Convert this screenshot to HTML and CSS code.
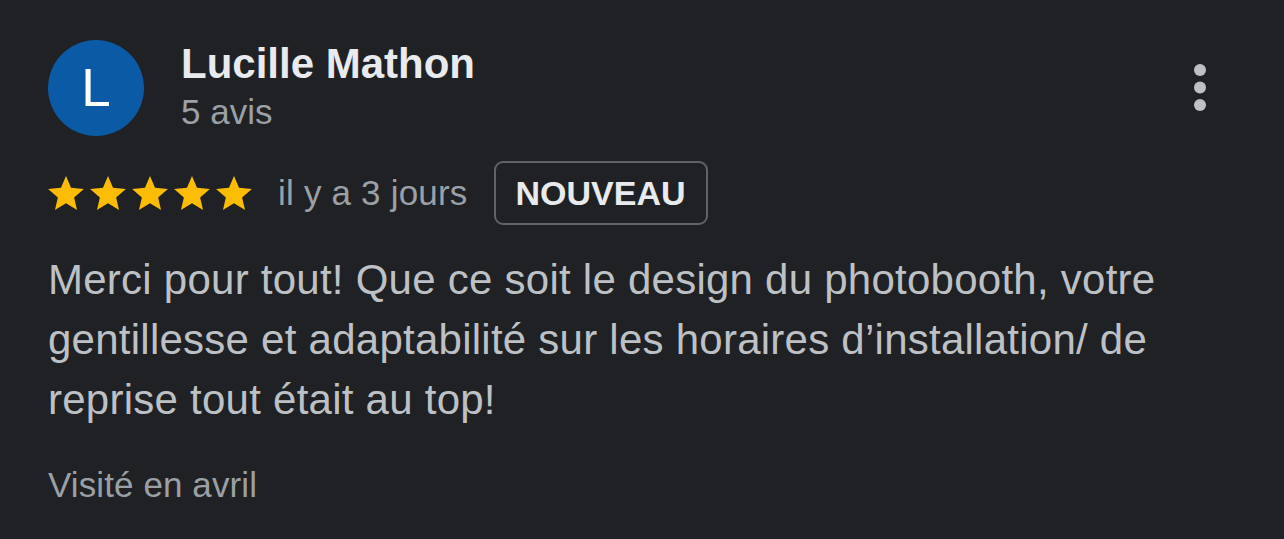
FILE: index.html
```html
<!DOCTYPE html>
<html lang="fr">
<head>
<meta charset="utf-8">
<title>Avis</title>
<link rel="stylesheet" href="styles.css">
</head>
<body>
<div class="review">
  <div class="header">
    <div class="avatar">L</div>
    <div class="author">
      <div class="name">Lucille Mathon</div>
      <div class="count">5 avis</div>
    </div>
    <button class="kebab" aria-label="Plus d'options">
      <svg width="12" height="48" viewBox="0 0 12 48"><circle cx="6" cy="6" r="6"/><circle cx="6" cy="23.5" r="6"/><circle cx="6" cy="41" r="6"/></svg>
    </button>
  </div>
  <div class="meta">
    <div class="stars">
      <svg class="star" viewBox="2 2 20 19"><path d="M12 17.27L18.18 21l-1.64-7.03L22 9.24l-7.19-.61L12 2 9.19 8.63 2 9.24l5.46 4.73L5.82 21z"/></svg>
      <svg class="star" viewBox="2 2 20 19"><path d="M12 17.27L18.18 21l-1.64-7.03L22 9.24l-7.19-.61L12 2 9.19 8.63 2 9.24l5.46 4.73L5.82 21z"/></svg>
      <svg class="star" viewBox="2 2 20 19"><path d="M12 17.27L18.18 21l-1.64-7.03L22 9.24l-7.19-.61L12 2 9.19 8.63 2 9.24l5.46 4.73L5.82 21z"/></svg>
      <svg class="star" viewBox="2 2 20 19"><path d="M12 17.27L18.18 21l-1.64-7.03L22 9.24l-7.19-.61L12 2 9.19 8.63 2 9.24l5.46 4.73L5.82 21z"/></svg>
      <svg class="star" viewBox="2 2 20 19"><path d="M12 17.27L18.18 21l-1.64-7.03L22 9.24l-7.19-.61L12 2 9.19 8.63 2 9.24l5.46 4.73L5.82 21z"/></svg>
    </div>
    <span class="date">il y a 3 jours</span>
    <span class="badge">NOUVEAU</span>
  </div>
  <p class="text">Merci pour tout! Que ce soit le design du photobooth, votre gentillesse et adaptabilité sur les horaires d’installation/ de reprise tout était au top!</p>
  <div class="visit">Visité en avril</div>
</div>
</body>
</html>
```

FILE: styles.css
```css
* { box-sizing: border-box; }
html, body {
  margin: 0;
  background: #202124;
  font-family: "Liberation Sans", Arial, sans-serif;
}
.review {
  padding: 40px 78px 0 48px;
}
.header {
  display: flex;
  align-items: flex-start;
}
.avatar {
  width: 96px;
  height: 96px;
  border-radius: 50%;
  background: #0b5aa5;
  color: #ffffff;
  font-size: 53px;
  line-height: 96px;
  text-align: center;
  flex: none;
}
.author {
  margin-left: 37px;
  flex: 1;
}
.name {
  color: #e8eaed;
  font-size: 42px;
  font-weight: 700;
  line-height: 48px;
}
.count {
  margin-top: 4px;
  color: #9aa0a6;
  font-size: 35px;
  line-height: 40px;
}
.kebab {
  align-self: center;
  background: none;
  border: 0;
  padding: 0;
  display: flex;
  fill: #bdc1c6;
}
.meta {
  margin-top: 25px;
  display: flex;
  align-items: center;
  gap: 26px;
}
.stars {
  display: flex;
  gap: 6px;
}
.star {
  width: 36px;
  height: 34px;
  fill: #fbbc04;
}
.date {
  color: #9aa0a6;
  font-size: 35px;
  letter-spacing: 0.2px;
}
.badge {
  height: 64px;
  padding: 0 20px;
  border: 2px solid #5f6368;
  border-radius: 9px;
  display: flex;
  align-items: center;
  color: #e8eaed;
  font-size: 34px;
  font-weight: 700;
}
.text {
  margin: 25px 0 0;
  color: #bdc1c6;
  font-size: 42px;
  line-height: 60px;
  letter-spacing: 0.25px;
}
.visit {
  margin-top: 35px;
  color: #9aa0a6;
  font-size: 35px;
  line-height: 40px;
  letter-spacing: 0.1px;
}
```
